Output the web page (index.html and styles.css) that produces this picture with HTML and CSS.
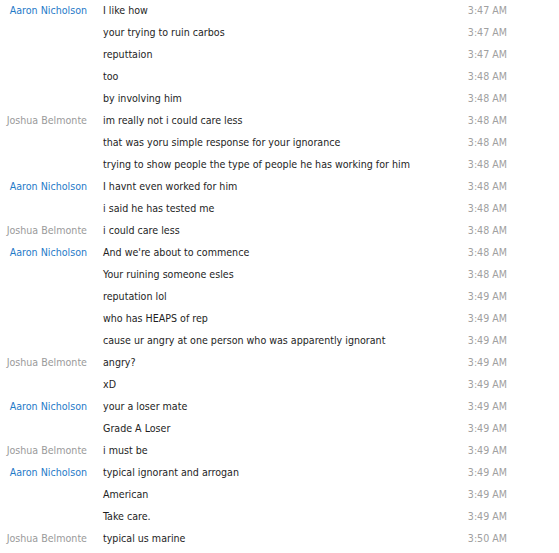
FILE: index.html
```html
<!DOCTYPE html>
<html>
<head>
<meta charset="utf-8">
<link rel="stylesheet" href="styles.css">
</head>
<body>
<div class="chat">
  <div class="row"><span class="name aaron">Aaron Nicholson</span><span class="msg">I like how</span><span class="time">3:47 AM</span></div>
  <div class="row"><span class="name"></span><span class="msg">your trying to ruin carbos</span><span class="time">3:47 AM</span></div>
  <div class="row"><span class="name"></span><span class="msg">reputtaion</span><span class="time">3:47 AM</span></div>
  <div class="row"><span class="name"></span><span class="msg">too</span><span class="time">3:48 AM</span></div>
  <div class="row"><span class="name"></span><span class="msg">by involving him</span><span class="time">3:48 AM</span></div>
  <div class="row"><span class="name joshua">Joshua Belmonte</span><span class="msg">im really not i could care less</span><span class="time">3:48 AM</span></div>
  <div class="row"><span class="name"></span><span class="msg">that was yoru simple response for your ignorance</span><span class="time">3:48 AM</span></div>
  <div class="row"><span class="name"></span><span class="msg">trying to show people the type of people he has working for him</span><span class="time">3:48 AM</span></div>
  <div class="row"><span class="name aaron">Aaron Nicholson</span><span class="msg">I havnt even worked for him</span><span class="time">3:48 AM</span></div>
  <div class="row"><span class="name"></span><span class="msg">i said he has tested me</span><span class="time">3:48 AM</span></div>
  <div class="row"><span class="name joshua">Joshua Belmonte</span><span class="msg">i could care less</span><span class="time">3:48 AM</span></div>
  <div class="row"><span class="name aaron">Aaron Nicholson</span><span class="msg">And we're about to commence</span><span class="time">3:48 AM</span></div>
  <div class="row"><span class="name"></span><span class="msg">Your ruining someone esles</span><span class="time">3:48 AM</span></div>
  <div class="row"><span class="name"></span><span class="msg">reputation lol</span><span class="time">3:49 AM</span></div>
  <div class="row"><span class="name"></span><span class="msg">who has HEAPS of rep</span><span class="time">3:49 AM</span></div>
  <div class="row"><span class="name"></span><span class="msg">cause ur angry at one person who was apparently ignorant</span><span class="time">3:49 AM</span></div>
  <div class="row"><span class="name joshua">Joshua Belmonte</span><span class="msg">angry?</span><span class="time">3:49 AM</span></div>
  <div class="row"><span class="name"></span><span class="msg">xD</span><span class="time">3:49 AM</span></div>
  <div class="row"><span class="name aaron">Aaron Nicholson</span><span class="msg">your a loser mate</span><span class="time">3:49 AM</span></div>
  <div class="row"><span class="name"></span><span class="msg">Grade A Loser</span><span class="time">3:49 AM</span></div>
  <div class="row"><span class="name joshua">Joshua Belmonte</span><span class="msg">i must be</span><span class="time">3:49 AM</span></div>
  <div class="row"><span class="name aaron">Aaron Nicholson</span><span class="msg">typical ignorant and arrogan</span><span class="time">3:49 AM</span></div>
  <div class="row"><span class="name"></span><span class="msg">American</span><span class="time">3:49 AM</span></div>
  <div class="row"><span class="name"></span><span class="msg">Take care.</span><span class="time">3:49 AM</span></div>
  <div class="row"><span class="name joshua">Joshua Belmonte</span><span class="msg">typical us marine</span><span class="time">3:50 AM</span></div>
</div>
<div class="footer"><span class="dot"></span><span class="rule"></span></div>
</body>
</html>
```
FILE: styles.css
```css
html, body {
  margin: 0;
  padding: 0;
  background: #ffffff;
}
body {
  font-family: "DejaVu Sans Condensed", "DejaVu Sans", sans-serif;
  font-size: 10.6px;
  color: #1e1e1e;
  width: 559px;
  height: 553px;
  overflow: hidden;
}
.chat {
  margin-top: -1px;
  display: flex;
  flex-direction: column;
}
.row {
  display: grid;
  grid-template-columns: 87px 1fr 70px;
  column-gap: 16px;
  height: 22px;
  align-items: center;
  width: 507px;
  white-space: nowrap;
}
.name {
  text-align: right;
}
.aaron {
  color: #1f7ac8;
}
.joshua {
  color: #9a9a9a;
}
.msg {
  color: #1e1e1e;
}
.time {
  text-align: right;
  color: #a0a0a0;
}
.footer {
  display: flex;
  align-items: center;
  height: 6px;
  margin-top: 3px;
}
.dot {
  width: 1px;
  height: 1px;
  background: #c8d4e0;
  margin-left: 275px;
}
.rule {
  margin-left: auto;
  width: 70px;
  height: 1px;
  background: linear-gradient(to right, #ffffff, #e4e4e4);
}
```
